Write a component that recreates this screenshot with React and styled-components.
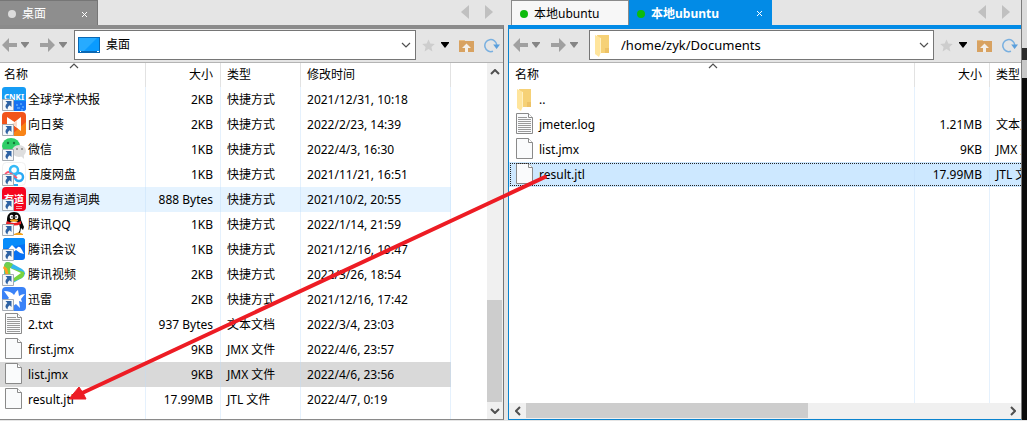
import React from "react";
import styled, { createGlobalStyle, css } from "styled-components";

const GlobalStyle = createGlobalStyle`
  * { box-sizing: border-box; }
  body {
    margin: 0;
    background: #e5e5e5;
    color: #000;
    font: 12px/16px "Noto Sans", "Noto Sans CJK SC", sans-serif;
  }
  button, select { font: inherit; color: inherit; }
  svg { display: block; }
`;

const Page = styled.main`
  position: relative;
  display: grid;
  grid-template-columns: minmax(0, 506fr) minmax(0, 515fr) 2px;
  column-gap: 4px;
  min-height: 100vh;
  padding-bottom: 1px;
  overflow: hidden;
`;

const Pane = styled.section`
  display: flex;
  flex-direction: column;
  min-width: 0;
`;

const WindowEdge = styled.div`
  margin-left: -4px;
  border-left: 1px solid #7c7c7c;
  background: linear-gradient(#dcdcdc 48px, #2b2b2b 48px 60px, #c8c8c8 60px 78px, #0b0b0b 78px);
`;

const TabBar = styled.div`
  display: flex;
  height: 25px;
  padding-left: ${(p) => (p.$remote ? 3 : 0)}px;
`;

const tabLooks = {
  local: css`
    background: #8e8e8e;
    color: #fff;
    border: solid #767676;
    border-width: 1px 1px 0 0;
  `,
  idle: css`
    background: #f7f7f7;
    border: solid #8a8a8a;
    border-width: 1px 1px 0 1px;
  `,
  active: css`
    background: #028be6;
    color: #fff;
    font-weight: 700;
  `,
};

const Tab = styled.div`
  display: flex;
  align-items: center;
  flex: 0 0 ${(p) => p.$width}px;
  padding: 2px 8px 0 8px;
  ${(p) => tabLooks[p.$look]}
`;

const Dot = styled.span`
  width: 8px;
  height: 8px;
  margin-right: 6px;
  border-radius: 50%;
  background: ${(p) => (p.$online ? "#0dbb0d" : "#dcdcdc")};
`;

const PlainButton = styled.button`
  display: grid;
  place-items: center;
  flex: none;
  padding: 0;
  border: 0;
  background: none;
`;

const CloseButton = styled(PlainButton)`
  width: 10px;
  height: 16px;
  margin-left: auto;
`;

const TabScroll = styled.div`
  display: flex;
  gap: 14px;
  margin-left: auto;
  padding: 0 10px 1px 0;
`;

const PaneBody = styled.div`
  display: flex;
  flex-direction: column;
  flex: 1;
  border-style: solid;
  ${(p) =>
    p.$remote
      ? css`border-color: #028be6 #0a84cf #0a84cf; border-width: 4px 0 1px 1px;`
      : css`border-color: #8b8b8b #767676 #8a8a8a; border-width: 4px 1px 1px 0;`}
`;

const Toolbar = styled.div`
  display: flex;
  align-items: center;
  height: 34px;
  padding: 0 ${(p) => (p.$remote ? 3 : 3)}px 1px 2px;
  padding-left: ${(p) => (p.$remote ? 4 : 2)}px;
  border-bottom: 1px solid #b4b4b4;
`;

const History = styled.div`
  display: flex;
  align-items: center;
  gap: 4px;
  width: 38px;
`;

const Location = styled.label`
  display: flex;
  align-items: center;
  flex: 1;
  min-width: 0;
  height: 30px;
  margin: 0 6px 0 ${(p) => (p.$remote ? 0 : -4)}px;
  padding: 0 4px 0 3px;
  border: 1px solid #767676;
  background: #fff;
`;

const LocationSelect = styled.select`
  flex: 1;
  min-width: 0;
  margin-left: 6px;
  appearance: none;
  border: 0;
  padding: 0;
  outline: none;
  background: none;
  font-size: ${(p) => (p.$remote ? 13 : 12)}px;
`;

const Tools = styled.div`
  display: flex;
  align-items: center;
`;

const Content = styled.div`
  display: flex;
  flex-direction: ${(p) => (p.$remote ? "column" : "row")};
  flex: 1;
  min-height: 0;
  background: #fff;
`;

const ListArea = styled.div`
  flex: 1;
  min-width: 0;
  display: flex;
  padding-right: ${(p) => (p.$remote ? 0 : 36)}px;
  overflow: hidden;
`;

const FileTable = styled.table`
  flex: none;
  width: ${(p) => (p.$remote ? "calc(100% + 49px)" : "100%")};
  table-layout: fixed;
  border-collapse: separate;
  border-spacing: 0;
`;

const HeadCell = styled.th`
  position: relative;
  height: 24px;
  padding: 0 7px 0 ${(p) => p.$indent || 6}px;
  border-right: 1px solid #e2e2e2;
  font-weight: 400;
  text-align: ${(p) => (p.$right ? "right" : "left")};
  white-space: nowrap;
`;

const SortMark = styled.svg`
  position: absolute;
  top: 0;
  left: 50%;
  margin-left: -4px;
`;

const rowStates = {
  hover: css`background: #e5f3ff;`,
  inactive: css`background: #d9d9d9;`,
  selected: css`
    background: #cde8ff;
    outline: 1px dotted #222;
    outline-offset: -2px;
  `,
};

const Row = styled.tr`
  height: 25px;
  ${(p) => rowStates[p.$state]}
`;

const Cell = styled.td`
  padding: 0 7px 0 6px;
  border-right: 1px solid rgba(190, 220, 250, 0.4);
  text-align: ${(p) => (p.$right ? "right" : "left")};
  white-space: nowrap;
  overflow: hidden;
`;

const NameCell = styled(Cell)`
  padding: 0 0 0 ${(p) => (p.$remote ? 4 : 2)}px;
`;

const FileName = styled.div`
  display: flex;
  align-items: center;
  gap: 2px;
  height: 25px;

  svg { align-self: flex-start; flex: none; }
`;

const ScrollTrack = styled.div`
  display: flex;
  flex-direction: ${(p) => (p.$vertical ? "column" : "row")};
  flex: 0 0 16px;
  background: #f0f0f0;
`;

const ScrollButton = styled(PlainButton)`
  flex: 0 0 17px;
`;

const ScrollThumb = styled.div`
  background: #cdcdcd;
  ${(p) =>
    p.$vertical
      ? css`height: 102px; width: 15px; margin-top: auto;`
      : css`width: 55%; height: 15px; margin-right: auto;`}
`;

const Pointer = styled.svg`
  position: absolute;
  top: 0;
  left: 0;
  pointer-events: none;
`;

/* Icons */

const Cross = () => (
  <svg width="7" height="7" viewBox="0 0 7 7"><path d="M1 1l5 5M6 1L1 6" stroke="#fff" /></svg>
);

const Triangle = ({ flip }) => (
  <svg width="10" height="14" viewBox="0 0 10 14">
    <path d={flip ? "M1 0v14l8-7z" : "M9 0v14L1 7z"} fill="#c0c0c0" />
  </svg>
);

const Arrow = ({ forward }) => (
  <svg width="15" height="14" viewBox="0 0 15 14">
    <path d={forward ? "M15 7L8 0v5H0v4h8v5z" : "M0 7l7-7v5h8v4H7v5z"} fill="#a0a0a0" />
  </svg>
);

const Caret = ({ dark }) => (
  <svg width="8" height="6" viewBox="0 0 8 6"><path d="M0 0h8v1L4 6 0 1z" fill={dark ? "#000" : "#858585"} /></svg>
);

const Chevron = ({ dir, heavy, ...rest }) => {
  const d = { up: "M1 5l4-4 4 4", down: "M1 1l4 4 4-4", left: "M5 1L1 5l4 4", right: "M1 1l4 4-4 4" }[dir];
  const vertical = dir === "up" || dir === "down";
  const w = vertical ? 10 : 6;
  const h = vertical ? 6 : 10;
  return (
    <svg width={w} height={h} viewBox={`0 0 ${w} ${h}`} {...rest}>
      <path d={d} fill="none" stroke="#505050" strokeWidth={heavy ? 2 : 1.2} />
    </svg>
  );
};

const Star = () => (
  <svg width="13" height="13" viewBox="0 0 13 13">
    <path d="M6.500 0.500l1.800 4.100 4.500.4-3.400 3 1 4.500-3.900-2.400-3.900 2.400 1-4.500-3.400-3 4.500-.4z" fill="#cdcdcd" />
  </svg>
);

const FolderUp = () => (
  <svg width="15" height="13" viewBox="0 0 15 13">
    <path d="M0 1h5l1 1h9v11H0z" fill="#d8a261" />
    <path d="M0 1h5l1 1H0z" fill="#e8bd82" />
    <path d="M7.500 4.500L12 9H9v4H6V9H3z" fill="#f4f0ea" />
  </svg>
);

const Refresh = () => (
  <svg width="16" height="15" viewBox="0 0 16 15">
    <path d="M9 13.200A6 6 0 1 1 12.800 7" fill="none" stroke="#79b0e0" strokeWidth="1.500" />
    <path d="M9.200 6.500h6.800l-3.400 4.500z" fill="#5b9fdc" />
  </svg>
);

const Desktop = () => (
  <svg width="22" height="16" viewBox="0 0 22 16">
    <path d="M0 0h22v16H0z" fill="#0a68b4" />
    <path d="M1 1h20v13H1z" fill="#0a9bff" />
    <path d="M1 1h18L6 14H1z" fill="#27abff" />
    <path d="M2 14.500h1M19 14.500h2" stroke="#fff" />
  </svg>
);

const Folder = ({ narrow }) => (
  <svg width={narrow ? 22 : 24} height="24" viewBox={narrow ? "2 0 22 24" : "0 0 24 24"}>
    <path d="M6 2h12v17l-1 1H9z" fill="#f6d176" />
    <path d="M14 15h4v5h-4z" fill="#edc266" />
    <path d="M4 2l6 3v14l-2 5-4-3z" fill="#ffe59c" />
    <path d="M10 5v15H9V5z" fill="#fff0c0" />
  </svg>
);

const Doc = ({ lines }) => (
  <svg width="24" height="24" viewBox="0 0 24 24">
    <path d="M3.500 1.500h12l4 4v16h-16z" fill="#fafbfc" stroke="#8a8a8a" />
    <path d="M15.500 1.500v4h4" fill="#fff" stroke="#8a8a8a" />
    {lines && <path d="M5 5.500h9M5 7.500h13M5 9.500h13M5 11.500h13M5 13.500h13M5 15.500h13M5 17.500h13M5 19.500h13" stroke="#9a9a9a" />}
  </svg>
);

const Shortcut = ({ children }) => (
  <svg width="24" height="24" viewBox="0 0 24 24">
    {children}
    <path d="M.5 12.500h11v11H.5z" fill="#f6f8fa" stroke="#a5abb3" />
    <path d="M3.500 14h6v6L7.700 18.200Q5.300 19.500 5.500 22.500 1.500 19.500 5.300 15.900z" fill="#2e62a3" />
  </svg>
);

const appIcons = {
  cnki: (
    <>
      <rect width="24" height="24" rx="3" fill="#159cf5" />
      <path d="M0 14h24v7q0 3-3 3H3q-3 0-3-3z" fill="#1672f3" />
      <text x="12" y="13" textAnchor="middle" fontSize="8" fontWeight="700" fill="#fff">CNKI</text>
      <path d="M14 18h2M18 17h2M20 20h2M15 21h3M19 23h2" stroke="#7fc5ff" />
    </>
  ),
  sunflower: (
    <>
      <rect width="24" height="24" rx="4" fill="#f2541b" />
      <path d="M24 10v10q0 4-4 4H8z" fill="#f88416" />
      <path d="M5 5l9 6L5 18zM19 5v14l-9-7z" fill="#fff" />
      <path d="M10 12l5-3v6z" fill="#ffd8c4" />
    </>
  ),
  wechat: (
    <>
      <ellipse cx="9" cy="9" rx="9" ry="8" fill="#2fce68" />
      <path d="M3 14l-1 5 5-2z" fill="#2fce68" />
      <ellipse cx="17" cy="14" rx="7" ry="6" fill="#dedede" />
      <path d="M19 19l3 3v-4z" fill="#dedede" />
      <circle cx="6" cy="6" r="1.200" fill="#14783a" /><circle cx="12" cy="6" r="1.200" fill="#14783a" />
      <circle cx="15" cy="12" r="1" fill="#888" /><circle cx="20" cy="12" r="1" fill="#888" />
    </>
  ),
  netdisk: (
    <>
      <rect x=".5" y=".5" width="23" height="23" rx="4" fill="#fff" stroke="#f1f1f1" />
      <circle cx="7" cy="14" r="4" fill="none" stroke="#ff5571" strokeWidth="2" />
      <circle cx="17" cy="15" r="4" fill="none" stroke="#2aa9f5" strokeWidth="2.500" />
      <circle cx="12" cy="8" r="4" fill="none" stroke="#36baf7" strokeWidth="2.500" />
      <path d="M8 11l7 5" stroke="#ff5571" strokeWidth="2" />
      <path d="M10 23h6" stroke="#2aa9f5" strokeWidth="2" />
    </>
  ),
  youdao: (
    <>
      <rect width="24" height="24" rx="4" fill="#f5051f" />
      <text x="12" y="16" textAnchor="middle" fontSize="10" fontWeight="700" fill="#fff">有道</text>
      <path d="M14 19.500h6M14 21.500h6" stroke="#ff9aa5" />
    </>
  ),
  qq: (
    <>
      <path d="M12 0c5 0 7 3 7 8l3 7-1 3-2-2-1 5H5l-1-5 1-8c0-5 2-8 7-8z" fill="#090909" />
      <ellipse cx="12" cy="16" rx="6" ry="7" fill="#fff" />
      <ellipse cx="9.500" cy="5" rx="1.800" ry="2.300" fill="#fff" /><ellipse cx="14.500" cy="5" rx="1.800" ry="2.300" fill="#fff" />
      <circle cx="10" cy="5" r=".8" /><circle cx="14" cy="5" r=".8" />
      <ellipse cx="12" cy="8.500" rx="4" ry="1.200" fill="#f4a31d" />
      <path d="M5 9q7 4 14 0v3q-4 2-9 1.500V17H7v-4l-3-1z" fill="#ee1c24" />
      <path d="M12 22q5-3 9 0v1h-9z" fill="#f4a31d" />
    </>
  ),
  meeting: (
    <>
      <rect x="1" y="1" width="22" height="22" rx="3" fill="#0872f4" />
      <path d="M1 4q0-3 3-3h16q3 0 3 3v3L1 12z" fill="#078cfa" />
      <path d="M2 17l8-9 4 4 2-2q2-1 4 3l2 4q-5-1-8-4-3 3-7 4z" fill="#fff" />
    </>
  ),
  video: (
    <>
      <path d="M2 4q1-6 7-3l11 6q6 4 0 9L9 22q-6 2-7-4z" fill="#35b7f2" />
      <path d="M2 4q1-6 7-3l2 1-8 14z" fill="#72cf4c" />
      <path d="M1 6q4 4 2 12h4V8L2 4z" fill="#ff9e20" />
      <path d="M5 5l17 5q1 3-2 6L8 21z" fill="#79d33e" />
      <path d="M8 6l11 5-10 7z" fill="#fff" />
    </>
  ),
  thunder: (
    <>
      <rect width="24" height="24" rx="4" fill="#3a82f7" />
      <path d="M2 4q7 0 10 4 2-4 4-5l1 6q3-2 6-2l-4 5 1 3-3-1 1 7-4-4-6 4 2-7-7 1 4-4z" fill="#fff" />
    </>
  ),
};

const FileIcon = ({ kind }) => {
  if (kind === "folder") return <Folder />;
  if (kind === "text") return <Doc lines />;
  if (kind === "blank") return <Doc />;
  return <Shortcut>{appIcons[kind]}</Shortcut>;
};

/* Data */

const localFiles = [
  ["cnki", "全球学术快报", "2KB", "快捷方式", "2021/12/31, 10:18"],
  ["sunflower", "向日葵", "2KB", "快捷方式", "2022/2/23, 14:39"],
  ["wechat", "微信", "1KB", "快捷方式", "2022/4/3, 16:30"],
  ["netdisk", "百度网盘", "1KB", "快捷方式", "2021/11/21, 16:51"],
  ["youdao", "网易有道词典", "888 Bytes", "快捷方式", "2021/10/2, 20:55", "hover"],
  ["qq", "腾讯QQ", "1KB", "快捷方式", "2022/1/14, 21:59"],
  ["meeting", "腾讯会议", "1KB", "快捷方式", "2021/12/16, 19:47"],
  ["video", "腾讯视频", "2KB", "快捷方式", "2022/3/26, 18:54"],
  ["thunder", "迅雷", "2KB", "快捷方式", "2021/12/16, 17:42"],
  ["text", "2.txt", "937 Bytes", "文本文档", "2022/3/4, 23:03"],
  ["blank", "first.jmx", "9KB", "JMX 文件", "2022/4/6, 23:57"],
  ["blank", "list.jmx", "9KB", "JMX 文件", "2022/4/6, 23:56", "inactive"],
  ["blank", "result.jtl", "17.99MB", "JTL 文件", "2022/4/7, 0:19"],
];

const remoteFiles = [
  ["folder", "..", "", ""],
  ["text", "jmeter.log", "1.21MB", "文本文档"],
  ["blank", "list.jmx", "9KB", "JMX 文件"],
  ["blank", "result.jtl", "17.99MB", "JTL 文件", null, "selected"],
];

const Navigation = ({ remote, path, icon }) => (
  <Toolbar $remote={remote}>
    <History>
      <PlainButton aria-label="后退"><Arrow /></PlainButton>
      <PlainButton aria-label="后退历史"><Caret /></PlainButton>
    </History>
    <History>
      <PlainButton aria-label="前进"><Arrow forward /></PlainButton>
      <PlainButton aria-label="前进历史"><Caret /></PlainButton>
    </History>
    <Location $remote={remote}>
      {icon}
      <LocationSelect $remote={remote} aria-label="位置" defaultValue={path}>
        <option>{path}</option>
      </LocationSelect>
      <Chevron dir="down" />
    </Location>
    <Tools>
      <PlainButton aria-label="收藏" style={undefined}><Star /></PlainButton>
      <ToolButton aria-label="收藏列表" $gap={6}><Caret dark /></ToolButton>
      <ToolButton aria-label="上级目录" $gap={10}><FolderUp /></ToolButton>
      <ToolButton aria-label="刷新" $gap={10}><Refresh /></ToolButton>
    </Tools>
  </Toolbar>
);

const ToolButton = styled(PlainButton)`
  margin-left: ${(p) => p.$gap}px;
`;

const TabNav = () => (
  <TabScroll>
    <PlainButton aria-label="上一个标签"><Triangle /></PlainButton>
    <PlainButton aria-label="下一个标签"><Triangle flip /></PlainButton>
  </TabScroll>
);

const Files = ({ remote, files }) => (
  <ListArea $remote={remote}>
    <FileTable $remote={remote}>
      <colgroup>
        <col />
        <col width="75" />
        <col width="80" />
        {!remote && <col width="150" />}
      </colgroup>
      <thead>
        <tr>
          <HeadCell $indent={remote ? 6 : 4}>
            名称
            <SortMark as={Chevron} dir="up" style={undefined} />
            <SortHolder><Chevron dir="up" /></SortHolder>
          </HeadCell>
          <HeadCell $right>大小</HeadCell>
          <HeadCell>类型</HeadCell>
          {!remote && <HeadCell>修改时间</HeadCell>}
        </tr>
      </thead>
      <tbody>
        {files.map(([icon, name, size, type, date, state]) => (
          <Row key={name} $state={state}>
            <NameCell $remote={remote}><FileName><FileIcon kind={icon} />{name}</FileName></NameCell>
            <Cell $right>{size}</Cell>
            <Cell>{type}</Cell>
            {!remote && <Cell>{date}</Cell>}
          </Row>
        ))}
        <tr>
          <Cell /><Cell /><Cell />{!remote && <Cell />}
        </tr>
      </tbody>
    </FileTable>
  </ListArea>
);

const SortHolder = styled.span`
  display: none;
`;

export default function App() {
  return (
    <>
      <GlobalStyle />
      <Page>
        <Pane>
          <TabBar>
            <Tab $look="local" $width={98}>
              <Dot />桌面<CloseButton aria-label="关闭"><Cross /></CloseButton>
            </Tab>
            <TabNav />
          </TabBar>
          <PaneBody>
            <Navigation path="桌面" icon={<Desktop />} />
            <Content>
              <Files files={localFiles} />
              <ScrollTrack $vertical>
                <ScrollButton aria-label="向上滚动"><Chevron dir="up" heavy /></ScrollButton>
                <ScrollThumb $vertical />
                <ScrollButton aria-label="向下滚动"><Chevron dir="down" heavy /></ScrollButton>
              </ScrollTrack>
            </Content>
          </PaneBody>
        </Pane>
        <Pane>
          <TabBar $remote>
            <Tab $look="idle" $width={118}><Dot $online />本地ubuntu</Tab>
            <Tab $look="active" $width={143}>
              <Dot $online />本地ubuntu<CloseButton aria-label="关闭"><Cross /></CloseButton>
            </Tab>
            <TabNav />
          </TabBar>
          <PaneBody $remote>
            <Navigation remote path="/home/zyk/Documents" icon={<Folder narrow />} />
            <Content $remote>
              <Files remote files={remoteFiles} />
              <ScrollTrack>
                <ScrollButton aria-label="向左滚动"><Chevron dir="left" heavy /></ScrollButton>
                <ScrollThumb />
                <ScrollButton aria-label="向右滚动"><Chevron dir="right" heavy /></ScrollButton>
              </ScrollTrack>
            </Content>
          </PaneBody>
        </Pane>
        <WindowEdge />
        <Pointer width="560" height="410" viewBox="0 0 560 410" aria-hidden="true">
          <path d="M545 177L80 394" stroke="#ed1c24" strokeWidth="4" strokeLinecap="round" />
          <path d="M69 399l10-12 4 6 3 6z" fill="#ed1c24" stroke="#ed1c24" strokeLinejoin="round" />
        </Pointer>
      </Page>
    </>
  );
}
